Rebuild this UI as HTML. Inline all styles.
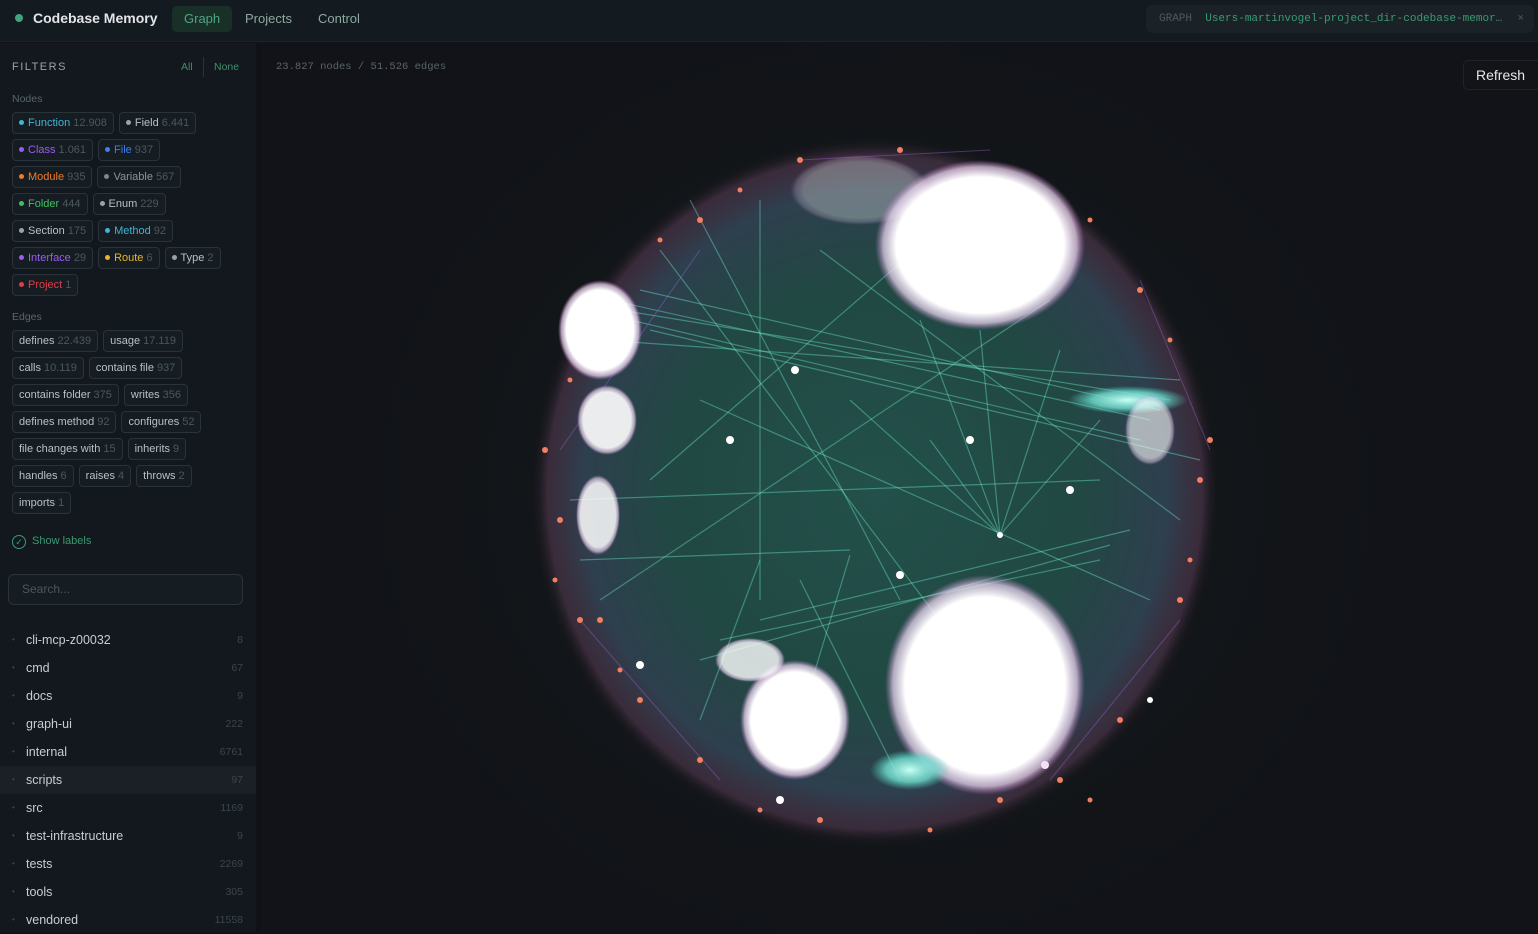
<!DOCTYPE html>
<html><head><meta charset="utf-8"><style>
*{box-sizing:border-box;margin:0;padding:0}
body{width:1538px;height:932px;overflow:hidden;background:#111318;font-family:"Liberation Sans",sans-serif;position:relative}
.top{position:absolute;left:0;top:0;width:1538px;height:42px;background:#131a20;border-bottom:1px solid #1b2329}
.logo{position:absolute;left:15px;top:14px;width:8px;height:8px;border-radius:50%;background:#3ea57a}
.title{position:absolute;left:33px;top:10px;color:#e3e6e8;font-size:14px;font-weight:bold}
.nav{position:absolute;top:6px;height:26px;line-height:26px;font-size:13px;color:#8fa8a0;padding:0 12px;border-radius:5px}
.gbox{position:absolute;left:1146px;top:5px;width:388px;height:28px;background:#1a2228;border-radius:6px;font-family:"Liberation Mono",monospace;font-size:11px;line-height:28px;padding-left:13px;color:#4d5a61;white-space:nowrap}
.side{position:absolute;left:0;top:43px;width:256px;height:889px;background:#12181d}
.strip{position:absolute;left:256px;top:43px;width:5px;height:889px;background:#0e1216}
.lbl{position:absolute;font-size:10.5px;color:#5a666c}
.tags{position:absolute;left:12px;width:215px;display:flex;flex-wrap:wrap;gap:5px 5px}
.t{height:22px;line-height:20px;border:1px solid #2a3339;border-radius:4px;background:#161d22;font-size:11px;padding:0 6px;color:#b8c0c4;white-space:nowrap}
.t i{display:inline-block;width:5px;height:5px;border-radius:50%;margin-right:4px;vertical-align:1px}
.t b{font-weight:normal;color:#4c575d;margin-left:3px}
.row{position:absolute;left:0;width:256px;height:28px;line-height:28px;font-size:12.5px;color:#c7cdd0}
.row s{text-decoration:none;position:absolute;left:12px;color:#3b454b;font-size:8px}
.row span{position:absolute;left:26px}
.row em{font-style:normal;position:absolute;right:13px;color:#3a454b;font-size:10.5px}
</style></head><body>
<div class="top">
<div class="logo"></div><div class="title">Codebase Memory</div>
<div class="nav" style="left:172px;background:#193029;color:#4fa582">Graph</div>
<div class="nav" style="left:233px">Projects</div>
<div class="nav" style="left:306px">Control</div>
<div class="gbox">GRAPH&nbsp; <span style="color:#3a9a72">Users-martinvogel-project_dir-codebase-memor…</span><span style="position:absolute;right:10px;color:#4d5a61">×</span></div>
</div>
<div class="side">
<div style="position:absolute;left:12px;top:18px;font-size:11px;letter-spacing:1.5px;color:#9aa3a8">FILTERS</div>
<div style="position:absolute;left:181px;top:18px;font-size:10.5px;color:#3f8f6a">All</div>
<div style="position:absolute;left:203px;top:14px;width:1px;height:20px;background:#2a3339"></div>
<div style="position:absolute;left:214px;top:18px;font-size:10.5px;color:#3f8f6a">None</div>
<div class="lbl" style="left:12px;top:50px">Nodes</div>
<div class="tags" style="top:69px">
<div class="t" style="color:#3fb4d4"><i style="background:#3fb4d4"></i>Function<b>12.908</b></div>
<div class="t"><i style="background:#9aa3ad"></i>Field<b>6.441</b></div>
<div class="t" style="color:#9b5cf0"><i style="background:#9b5cf0"></i>Class<b>1.061</b></div>
<div class="t" style="color:#3d7ef0"><i style="background:#3d7ef0"></i>File<b>937</b></div>
<div class="t" style="color:#ef7a2a"><i style="background:#ef7a2a"></i>Module<b>935</b></div>
<div class="t" style="color:#8a949b"><i style="background:#7c868e"></i>Variable<b>567</b></div>
<div class="t" style="color:#3fc060"><i style="background:#3fc060"></i>Folder<b>444</b></div>
<div class="t"><i style="background:#9aa3ad"></i>Enum<b>229</b></div>
<div class="t"><i style="background:#9aa3ad"></i>Section<b>175</b></div>
<div class="t" style="color:#3fb4d4"><i style="background:#3fb4d4"></i>Method<b>92</b></div>
<div class="t" style="color:#9b5cf0"><i style="background:#9b5cf0"></i>Interface<b>29</b></div>
<div class="t" style="color:#e8b42a"><i style="background:#e8b42a"></i>Route<b>6</b></div>
<div class="t"><i style="background:#9aa3ad"></i>Type<b>2</b></div>
<div class="t" style="color:#d9404a"><i style="background:#d9404a"></i>Project<b>1</b></div>
</div>
<div class="lbl" style="left:12px;top:268px">Edges</div>
<div class="tags" style="top:287px">
<div class="t">defines<b>22.439</b></div><div class="t">usage<b>17.119</b></div>
<div class="t">calls<b>10.119</b></div><div class="t">contains file<b>937</b></div>
<div class="t">contains folder<b>375</b></div><div class="t">writes<b>356</b></div>
<div class="t">defines method<b>92</b></div><div class="t">configures<b>52</b></div>
<div class="t">file changes with<b>15</b></div><div class="t">inherits<b>9</b></div>
<div class="t">handles<b>6</b></div><div class="t">raises<b>4</b></div><div class="t">throws<b>2</b></div>
<div class="t">imports<b>1</b></div>
</div>
<div style="position:absolute;left:12px;top:492px;width:14px;height:14px;border:1px solid #3a9a72;border-radius:50%;color:#3a9a72;font-size:9px;line-height:12px;text-align:center">✓</div>
<div style="position:absolute;left:32px;top:492px;font-size:11px;color:#3a9a72">Show labels</div>
<div style="position:absolute;left:8px;top:531px;width:235px;height:31px;border:1px solid #2a3339;border-radius:6px;background:#161d22;font-size:12px;color:#4c575d;line-height:29px;padding-left:13px">Search...</div>
<div class="row" style="top:583px"><s>•</s><span>cli-mcp-z00032</span><em>8</em></div>
<div class="row" style="top:611px"><s>•</s><span>cmd</span><em>67</em></div>
<div class="row" style="top:639px"><s>•</s><span>docs</span><em>9</em></div>
<div class="row" style="top:667px"><s>•</s><span>graph-ui</span><em>222</em></div>
<div class="row" style="top:695px"><s>•</s><span>internal</span><em>6761</em></div>
<div class="row" style="top:723px;background:#1a2026"><s>•</s><span>scripts</span><em>97</em></div>
<div class="row" style="top:751px"><s>•</s><span>src</span><em>1169</em></div>
<div class="row" style="top:779px"><s>•</s><span>test-infrastructure</span><em>9</em></div>
<div class="row" style="top:807px"><s>•</s><span>tests</span><em>2269</em></div>
<div class="row" style="top:835px"><s>•</s><span>tools</span><em>305</em></div>
<div class="row" style="top:863px"><s>•</s><span>vendored</span><em>11558</em></div>
</div>
<div class="strip"></div>
<div style="position:absolute;left:261px;top:43px;width:1277px;height:889px;background:radial-gradient(ellipse 520px 470px at 614px 450px,#1a1f24 0%,#131619 60%,#111318 100%)"></div>
<div style="position:absolute;left:276px;top:61px;font-family:'Liberation Mono',monospace;font-size:10.5px;color:#5a6468">23.827 nodes / 51.526 edges</div>
<div style="position:absolute;left:1463px;top:60px;width:80px;height:30px;border:1px solid #1e2328;border-radius:5px;background:#121418;color:#e6e8ea;font-size:14px;line-height:28px;padding-left:12px">Refresh</div>
<svg style="position:absolute;left:0;top:0" width="1538" height="932">
<defs>
<radialGradient id="sph" cx="50%" cy="50%" r="50%">
<stop offset="0" stop-color="#23504a"/><stop offset="0.6" stop-color="#214843"/><stop offset="0.85" stop-color="#2e3f4e"/><stop offset="0.95" stop-color="#4a3448" stop-opacity=".7"/><stop offset="1" stop-color="#111318" stop-opacity="0"/>
</radialGradient>
<radialGradient id="wb" cx="50%" cy="50%" r="50%">
<stop offset="0" stop-color="#fff"/><stop offset="0.8" stop-color="#fff"/><stop offset="0.92" stop-color="#f0d8f4" stop-opacity=".7"/><stop offset="1" stop-color="#d080d0" stop-opacity="0"/>
</radialGradient>
<radialGradient id="cy" cx="50%" cy="50%" r="50%">
<stop offset="0" stop-color="#c8fff5"/><stop offset="0.6" stop-color="#6fe0d0" stop-opacity=".8"/><stop offset="1" stop-color="#4fd0c0" stop-opacity="0"/>
</radialGradient>
</defs>
<ellipse cx="875" cy="492" rx="345" ry="355" fill="url(#sph)"/>
<g stroke="#6ff0d0" stroke-opacity=".4" stroke-width="1.2">
<line x1="610" y1="300" x2="1150" y2="420"/><line x1="620" y1="310" x2="1170" y2="400"/><line x1="630" y1="320" x2="1140" y2="440"/>
<line x1="600" y1="340" x2="1180" y2="380"/><line x1="640" y1="290" x2="1160" y2="410"/><line x1="650" y1="330" x2="1200" y2="460"/>
<line x1="700" y1="660" x2="1110" y2="545"/><line x1="720" y1="640" x2="1100" y2="560"/><line x1="760" y1="620" x2="1130" y2="530"/>
<line x1="1000" y1="535" x2="920" y2="320"/><line x1="1000" y1="535" x2="980" y2="330"/><line x1="1000" y1="535" x2="1060" y2="350"/>
<line x1="1000" y1="535" x2="850" y2="400"/><line x1="1000" y1="535" x2="1100" y2="420"/><line x1="1000" y1="535" x2="930" y2="440"/>
<line x1="800" y1="580" x2="900" y2="780"/><line x1="760" y1="560" x2="700" y2="720"/><line x1="850" y1="555" x2="800" y2="720"/>
<line x1="580" y1="560" x2="850" y2="550"/><line x1="570" y1="500" x2="1100" y2="480"/><line x1="690" y1="200" x2="900" y2="600"/>
<line x1="660" y1="250" x2="1000" y2="700"/><line x1="700" y1="400" x2="1150" y2="600"/><line x1="760" y1="200" x2="760" y2="600"/>
<line x1="600" y1="600" x2="1050" y2="300"/><line x1="820" y1="250" x2="1180" y2="520"/><line x1="650" y1="480" x2="950" y2="220"/>
</g>
<g stroke="#b070f0" stroke-opacity=".35" stroke-width="1">
<line x1="560" y1="450" x2="700" y2="250"/><line x1="580" y1="620" x2="720" y2="780"/><line x1="1050" y1="780" x2="1180" y2="620"/><line x1="1140" y1="280" x2="1210" y2="450"/><line x1="800" y1="160" x2="990" y2="150"/>
</g>
<g fill="#f08060">
<circle cx="560" cy="520" r="3"/><circle cx="580" cy="620" r="3"/><circle cx="640" cy="700" r="3"/><circle cx="700" cy="760" r="3"/><circle cx="820" cy="820" r="3"/><circle cx="1000" cy="800" r="3"/><circle cx="1120" cy="720" r="3"/><circle cx="1180" cy="600" r="3"/><circle cx="1200" cy="480" r="3"/><circle cx="1140" cy="290" r="3"/><circle cx="700" cy="220" r="3"/><circle cx="800" cy="160" r="3"/><circle cx="900" cy="150" r="3"/><circle cx="600" cy="620" r="3"/><circle cx="1060" cy="780" r="3"/><circle cx="545" cy="450" r="3"/><circle cx="1210" cy="440" r="3"/>
<circle cx="660" cy="240" r="2.5"/><circle cx="740" cy="190" r="2.5"/><circle cx="1090" cy="220" r="2.5"/><circle cx="1170" cy="340" r="2.5"/><circle cx="1190" cy="560" r="2.5"/><circle cx="1090" cy="800" r="2.5"/><circle cx="930" cy="830" r="2.5"/><circle cx="760" cy="810" r="2.5"/><circle cx="620" cy="670" r="2.5"/><circle cx="555" cy="580" r="2.5"/><circle cx="570" cy="380" r="2.5"/>
</g>
<g fill="#fff">
<circle cx="730" cy="440" r="4"/><circle cx="970" cy="440" r="4"/><circle cx="1070" cy="490" r="4"/><circle cx="900" cy="575" r="4"/><circle cx="1045" cy="765" r="4"/><circle cx="780" cy="800" r="4"/><circle cx="640" cy="665" r="4"/><circle cx="795" cy="370" r="4"/><circle cx="1150" cy="700" r="3"/><circle cx="1000" cy="535" r="3"/>
</g>
<ellipse cx="1128" cy="400" rx="60" ry="14" fill="url(#cy)"/>
<ellipse cx="600" cy="330" rx="42" ry="50" fill="url(#wb)"/>
<ellipse cx="607" cy="420" rx="30" ry="35" fill="url(#wb)" opacity=".9"/>
<ellipse cx="598" cy="515" rx="22" ry="40" fill="url(#wb)" opacity=".85"/>
<ellipse cx="860" cy="190" rx="70" ry="35" fill="url(#wb)" opacity=".3"/>
<ellipse cx="980" cy="245" rx="105" ry="85" fill="url(#wb)"/>
<ellipse cx="985" cy="685" rx="100" ry="110" fill="url(#wb)"/>
<ellipse cx="795" cy="720" rx="55" ry="60" fill="url(#wb)"/>
<ellipse cx="750" cy="660" rx="35" ry="22" fill="url(#wb)" opacity=".8"/>
<ellipse cx="1150" cy="430" rx="25" ry="35" fill="url(#wb)" opacity=".6"/>
<ellipse cx="910" cy="770" rx="40" ry="20" fill="url(#cy)"/>
</svg>
</body></html>
